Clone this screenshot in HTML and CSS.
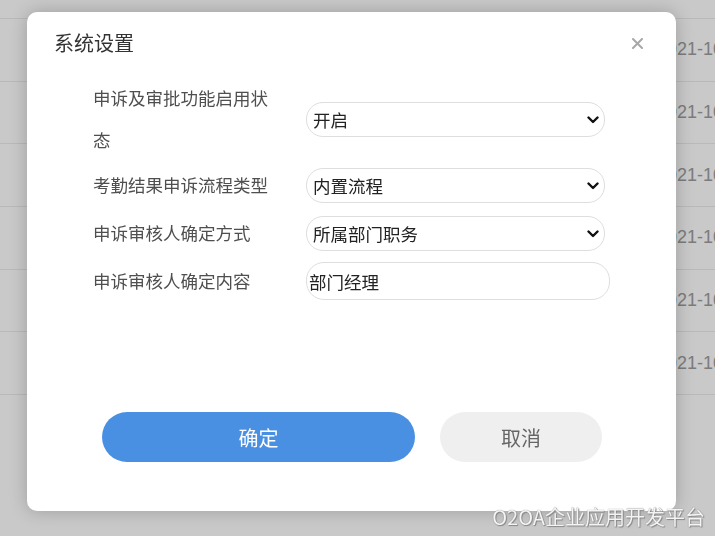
FILE: index.html
```html
<!DOCTYPE html>
<html lang="zh-CN">
	<head>
		<meta charset="UTF-8" />
		<meta name="viewport" content="width=device-width, initial-scale=1.0" />
		<link rel="stylesheet" href="styles.css">
		<title>系统设置</title>
	</head>
	<body>
		<div class="list">
			<div class="list_top"></div>
			<div class="list_row"><span class="cell_main"></span><span class="cell_date">2021-10-18 09:12</span></div>
			<div class="list_row"><span class="cell_main"></span><span class="cell_date">2021-10-18 09:05</span></div>
			<div class="list_row"><span class="cell_main"></span><span class="cell_date">2021-10-17 18:31</span></div>
			<div class="list_row"><span class="cell_main"></span><span class="cell_date">2021-10-17 17:46</span></div>
			<div class="list_row"><span class="cell_main"></span><span class="cell_date">2021-10-16 08:57</span></div>
			<div class="list_row"><span class="cell_main"></span><span class="cell_date">2021-10-15 10:20</span></div>
		</div>

		<div class="mask">
			<div class="dialog">
				<div class="dialog_head">
					<h2 class="dialog_title">系统设置</h2>
					<span class="dialog_close">
						<svg width="11" height="11" viewBox="0 0 11 11">
							<path d="M1 1 L10 10 M10 1 L1 10" stroke="#a8a8a8" stroke-width="2" stroke-linecap="round" />
						</svg>
					</span>
				</div>
				<div class="form">
					<div class="form_row">
						<label class="form_label">申诉及审批功能启用状态</label>
						<div class="select_wrap">
							<select class="form_select">
								<option>开启</option>
								<option>关闭</option>
							</select>
							<svg class="select_arrow" width="12" height="8" viewBox="0 0 12 8">
								<path d="M1.5 1.5 L6 6 L10.5 1.5" fill="none" stroke="#111" stroke-width="2.4" stroke-linecap="round" stroke-linejoin="round" />
							</svg>
						</div>
					</div>
					<div class="form_row">
						<label class="form_label">考勤结果申诉流程类型</label>
						<div class="select_wrap">
							<select class="form_select">
								<option>内置流程</option>
								<option>自定义流程</option>
							</select>
							<svg class="select_arrow" width="12" height="8" viewBox="0 0 12 8">
								<path d="M1.5 1.5 L6 6 L10.5 1.5" fill="none" stroke="#111" stroke-width="2.4" stroke-linecap="round" stroke-linejoin="round" />
							</svg>
						</div>
					</div>
					<div class="form_row">
						<label class="form_label">申诉审核人确定方式</label>
						<div class="select_wrap">
							<select class="form_select">
								<option>所属部门职务</option>
								<option>指定人员</option>
							</select>
							<svg class="select_arrow" width="12" height="8" viewBox="0 0 12 8">
								<path d="M1.5 1.5 L6 6 L10.5 1.5" fill="none" stroke="#111" stroke-width="2.4" stroke-linecap="round" stroke-linejoin="round" />
							</svg>
						</div>
					</div>
					<div class="form_row">
						<label class="form_label">申诉审核人确定内容</label>
						<input class="form_input" type="text" value="部门经理" />
					</div>
				</div>
				<div class="dialog_foot">
					<button class="btn btn_ok">确定</button>
					<button class="btn btn_cancel">取消</button>
				</div>
			</div>
		</div>

		<div class="watermark">O2OA企业应用开发平台</div>
	</body>
</html>
```

FILE: styles.css
```css
* {
	margin: 0;
	padding: 0;
	box-sizing: border-box;
}
body {
	width: 715px;
	height: 536px;
	overflow: hidden;
	background-color: #c9c9c9;
	font-family: "Noto Sans CJK SC", "Liberation Sans", sans-serif;
}
.list_top {
	height: 19px;
	border-bottom: 1px solid #b9b9b9;
}
.list_row {
	display: flex;
	align-items: center;
	height: 62.67px;
	border-bottom: 1px solid #b9b9b9;
	white-space: nowrap;
}
.cell_main {
	flex: 0 0 657px;
}
.cell_date {
	font-family: "Liberation Sans", sans-serif;
	font-size: 18px;
	color: #7c7c7c;
}
.mask {
	position: fixed;
	top: 0;
	left: 0;
	right: 0;
	bottom: 0;
}
.dialog {
	position: absolute;
	left: 27px;
	top: 12px;
	width: 649px;
	height: 499px;
	background-color: #fff;
	border-radius: 10px;
	box-shadow: 0 0 18px rgba(0, 0, 0, 0.22);
}
.dialog_head {
	display: flex;
	justify-content: space-between;
	align-items: center;
	padding: 19px 33px 0 27px;
}
.dialog_title {
	font-size: 20px;
	font-weight: normal;
	line-height: 24px;
	color: #333;
}
.dialog_close {
	display: flex;
	cursor: pointer;
}
.form {
	margin-top: 22px;
	padding-left: 66px;
}
.form_row {
	display: grid;
	grid-template-columns: 180px auto;
	column-gap: 33px;
	align-items: center;
	min-height: 48px;
}
.form_label {
	font-size: 17.5px;
	line-height: 42px;
	color: #4f4f4f;
}
.select_wrap {
	position: relative;
	width: 299px;
	height: 35px;
}
.form_select {
	appearance: none;
	-webkit-appearance: none;
	width: 100%;
	height: 100%;
	padding: 0 30px 0 6px;
	border: 1px solid #dedede;
	border-radius: 17px;
	background-color: #fff;
	font-family: inherit;
	font-size: 17.5px;
	color: #222;
	outline: none;
}
.select_arrow {
	position: absolute;
	right: 6px;
	top: 14px;
	pointer-events: none;
}
.form_input {
	width: 304px;
	height: 38px;
	padding: 0 2px;
	border: 1px solid #dedede;
	border-radius: 18px;
	font-family: inherit;
	font-size: 17.5px;
	color: #222;
	outline: none;
}
.dialog_foot {
	display: flex;
	gap: 25px;
	margin-top: 107px;
	padding-left: 75px;
}
.btn {
	height: 50px;
	border: none;
	border-radius: 25px;
	font-family: inherit;
	font-size: 20px;
	cursor: pointer;
}
.btn_ok {
	width: 313px;
	background-color: #4a90e2;
	color: #fff;
}
.btn_cancel {
	width: 162px;
	background-color: #efefef;
	color: #666;
}
.watermark {
	position: fixed;
	right: 10px;
	bottom: 7px;
	font-size: 20px;
	line-height: 24px;
	color: #f4f4f4;
	text-shadow: 0 0 1px #6f6f6f, 1px 1px 1px #8a8a8a;
}
```
